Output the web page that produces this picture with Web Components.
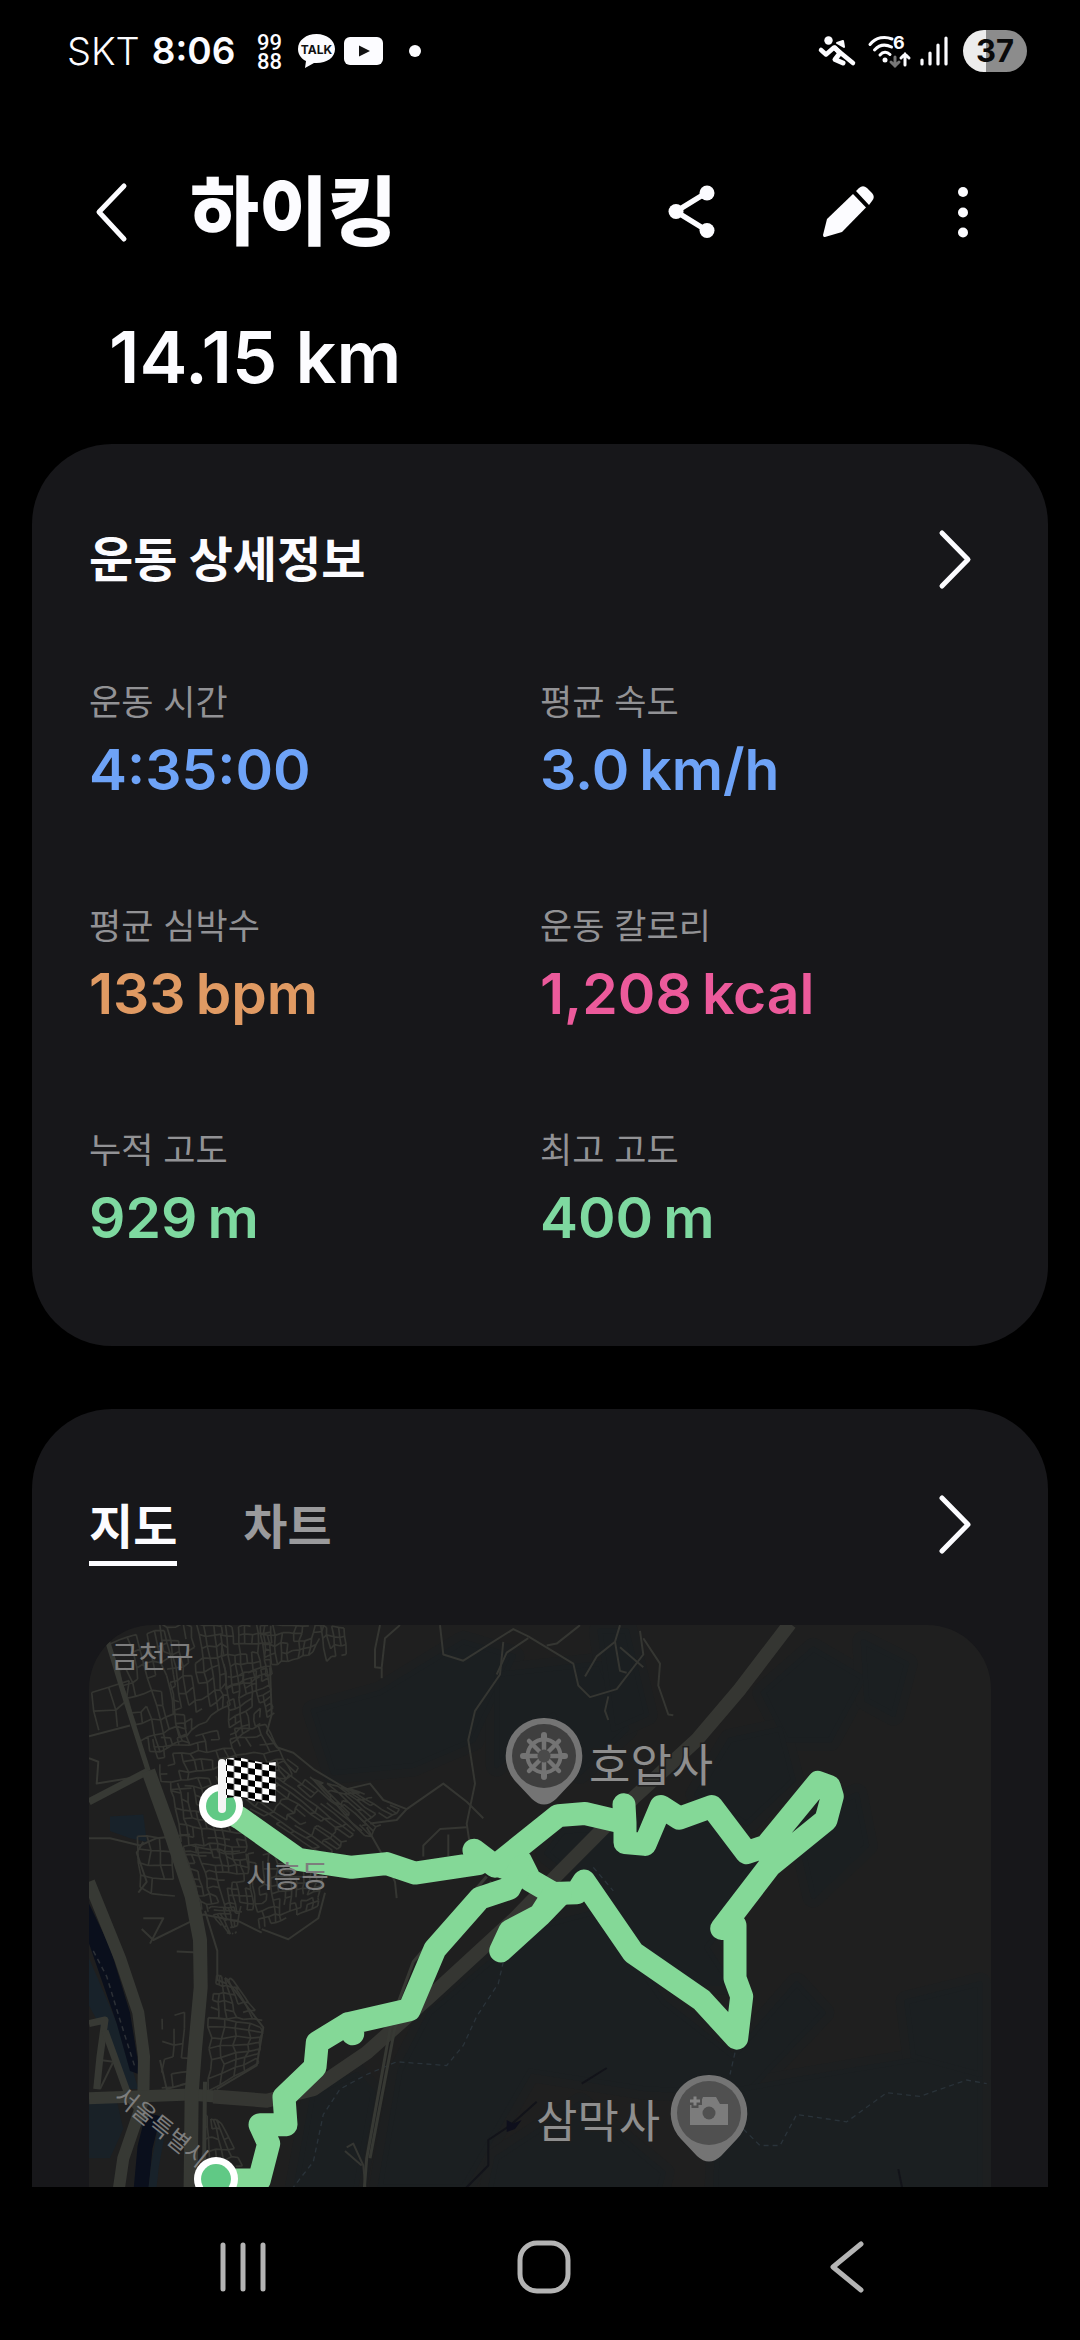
<!DOCTYPE html>
<html lang="ko">
<head>
<meta charset="utf-8">
<meta name="viewport" content="width=device-width, initial-scale=1">
<title>하이킹</title>
<style>
  body { margin: 0; background: #000; color: #fcfcff; font-family: Inter, "Noto Sans CJK KR", sans-serif; }
</style>
</head>
<body>
<hike-screen></hike-screen>

<script>
const define = (name, html, ready) => customElements.define(name, class extends HTMLElement {
  constructor() {
    super();
    const t = document.createElement('template');
    t.innerHTML = html;
    this.attachShadow({ mode: 'open' }).append(t.content.cloneNode(true));
  }
  connectedCallback() { if (ready) ready(this, this.shadowRoot); }
});

/* ---------- status bar ---------- */
define('status-bar', `
<style>
  :host { display: flex; justify-content: space-between; align-items: center; height: 102px; padding: 0 53px 0 67px; box-sizing: border-box; font-size: 38px; line-height: 46px; }
  div { display: flex; align-items: center; }
  .net { font-weight: 300; }
  .time { font-weight: 600; margin: 0 20px 0 12px; font-size: 37px; }
  svg { display: block; overflow: visible; }
  .l svg { margin-right: 9px; }
  .r { gap: 10px; }
  .bat { width: 64px; height: 42px; border-radius: 21px; justify-content: center; background: linear-gradient(90deg, #ececec 36%, #8c8c8c 36%); color: #0a0a0a; font-size: 31px; font-weight: 700; margin-left: 5px; }
</style>
<div class="l">
  <span class="net">SKT</span><span class="time">8:06</span>
  <svg width="34" height="44" viewBox="0 0 34 44" fill="#fcfcff" font-family="Roboto, sans-serif" font-size="22" font-weight="500"><text x="2" y="21">99</text><text x="2" y="40">88</text></svg>
  <svg width="37" height="36" viewBox="0 0 37 36"><path fill="#fcfcff" d="M18.500 1C8.500 1 0 7 0 16c0 6 4 10 8 12l-1 7 9-5h2.500C29 30 37 24.500 37 16S29 1 18.500 1z"/><text x="18.500" y="21" text-anchor="middle" font-size="12" font-weight="700" fill="#111">TALK</text></svg>
  <svg width="39" height="28" viewBox="0 0 39 28"><rect width="39" height="28" rx="6" fill="#fcfcff"/><path d="M15 8.500v11L26 14z" fill="#111"/></svg>
  <svg width="40" height="12" viewBox="0 0 40 12"><circle cx="23" cy="6" r="6" fill="#fcfcff"/></svg>
</div>
<div class="r">
  <svg width="40" height="32" viewBox="0 0 40 32" fill="none" stroke="#fcfcff" stroke-linecap="round" stroke-linejoin="round"><circle cx="10.500" cy="5.500" r="4.200" fill="#fcfcff" stroke="none"/><path stroke-width="4.500" d="M3 15l5 4.500 8-7 19 15.500"/><path stroke-width="5" d="M17 13l5 5-5 6.500 8 3.500"/><path d="M19 8l6-2 1 6z" fill="#fcfcff" stroke-width="2"/></svg>
  <svg width="42" height="34" viewBox="0 0 42 34" fill="none" stroke="#fcfcff" stroke-width="3" stroke-linecap="round"><path d="M2 10.500C8 3 17 2 24 5M6.500 16c5-5.500 11-6 17-3M12 21c3-3.500 7-3.500 10-.5"/><circle cx="17" cy="26" r="2.500" fill="#fcfcff" stroke="none"/><path stroke="#777" d="M27 23v9m-4-4l4 4 4-4"/><path d="M37 31V20m-4 4l4-4 4 4"/><text x="25" y="15" font-size="18" font-weight="700" fill="#fcfcff" stroke="none">6</text></svg>
  <svg width="28" height="30" viewBox="0 0 28 30" stroke="#fcfcff" stroke-width="3.200" stroke-linecap="round"><path d="M2 24v4M10 17v11M18 9v19M26 2v26"/></svg>
  <div class="bat">37</div>
</div>`);

/* ---------- app header ---------- */
define('app-header', `
<style>
  :host { display: flex; align-items: center; height: 220px; padding: 0 81px 0 75px; box-sizing: border-box; }
  button { width: 72px; height: 72px; padding: 0; border: 0; background: none; color: inherit; }
  svg { display: block; }
  h1 { flex: 1; margin: 0 0 0 43px; font-size: 75px; line-height: 112px; font-weight: 900; }
  nav { display: flex; gap: 84px; margin-right: 43px; }
</style>
<button aria-label="뒤로"><svg width="72" height="72" viewBox="0 0 72 72" fill="none" stroke="currentColor" stroke-width="5" stroke-linecap="round" stroke-linejoin="round"><path d="M49 10L24 36l25 27"/></svg></button>
<h1><slot></slot></h1>
<nav>
  <button aria-label="공유"><svg width="72" height="72" viewBox="0 0 72 72" fill="currentColor"><path d="M50 17L20 35.500 50 54" fill="none" stroke="currentColor" stroke-width="5.500"/><circle cx="51" cy="17" r="7.500"/><circle cx="20" cy="35.500" r="7.500"/><circle cx="51" cy="54.500" r="7.500"/></svg></button>
  <button aria-label="편집"><svg width="72" height="72" viewBox="0 0 72 72" fill="currentColor"><path d="M41 18L54 31.500 30 56 13 61q-2 .5-2-2L15 43z"/><path d="M44 15l3-3q4-3.500 8 0l5 5q3.500 4 0 8l-3 4z"/></svg></button>
</nav>
<button aria-label="더보기"><svg width="72" height="72" viewBox="0 0 72 72" fill="currentColor"><circle cx="36" cy="16" r="5"/><circle cx="36" cy="36.500" r="5"/><circle cx="36" cy="56.500" r="5"/></svg></button>`);

/* ---------- card ---------- */
define('info-card', `
<style>
  :host { display: block; background: #17171a; border-radius: 80px; padding: 80px 57px 94px; }
  header { display: flex; justify-content: space-between; }
  button { width: 72px; height: 72px; padding: 0; border: 0; background: none; color: inherit; }
  svg { display: block; }
</style>
<header><slot name="head"></slot>
<button aria-label="자세히"><svg width="72" height="72" viewBox="0 0 72 72" fill="none" stroke="currentColor" stroke-width="5" stroke-linecap="round" stroke-linejoin="round"><path d="M23 9l26 26.500L23 62"/></svg></button></header>
<slot></slot>`);

/* ---------- one metric ---------- */
define('metric-item', `
<style>
  :host { display: flex; flex-direction: column; gap: 12px; }
  .label { color: #929295; font-size: 35px; line-height: 44px; }
  .value { display: flex; gap: 10px; color: var(--tone); font-size: 57px; line-height: 68px; font-weight: 600; }
</style>
<div class="label"></div>
<div class="value"><span class="n"></span><span class="u"></span></div>`, (el, root) => {
  root.querySelector('.label').textContent = el.getAttribute('label');
  root.querySelector('.n').textContent = el.getAttribute('value');
  const unit = el.getAttribute('unit');
  if (unit) root.querySelector('.u').textContent = unit; else root.querySelector('.u').remove();
});

/* ---------- tabs ---------- */
define('view-tabs', `
<style>
  :host { display: flex; gap: 66px; }
  button { padding: 4px 0 0; border: 0; border-bottom: 5px solid transparent; background: none; color: #9a9a9c; font: inherit; font-size: 48px; line-height: 68px; font-weight: 700; }
  button[aria-selected=true] { color: #fcfcff; border-color: currentColor; }
</style>
<button role="tab" aria-selected="true">지도</button><button role="tab" aria-selected="false">차트</button>`);

/* ---------- map ---------- */
define('route-map', `
<style>
  :host { display: block; border-radius: 64px; overflow: hidden; background: #1f1f1f; }
  svg { display: block; width: 100%; height: auto; }
</style>
<svg viewBox="0 0 902 700" role="img" aria-label="경로 지도" font-family="'Noto Sans CJK KR', sans-serif">
  <defs>
    <pattern id="chk" width="14" height="12" patternUnits="userSpaceOnUse" patternTransform="translate(138 134) skewY(8)"><rect width="14" height="12" fill="#fff"/><path d="M0 0h7v6H0zM7 6h7v6H7z" fill="#000"/></pattern>
  </defs>
  <g id="base"></g>
  <g id="trail" fill="none" stroke="#84d897" stroke-width="23" stroke-linecap="round" stroke-linejoin="round"></g>
  <g id="ends">
    <circle cx="132" cy="181" r="22" fill="#fff"/><circle cx="132" cy="181" r="15" fill="#60c985"/>
    <circle cx="127" cy="554" r="22" fill="#fff"/><circle cx="127" cy="554" r="15" fill="#60c985"/>
    <path d="M137 134q11-3 24 1t26 2v40q-12 2-25-2t-25-2z" fill="url(#chk)"/>
    <path d="M133 138v46" stroke="#f4f4f4" stroke-width="8" stroke-linecap="round"/>
  </g>
  <g>
    <path d="M455 93a38 38 0 0 1 28 64l-16 17q-12 11-24 0l-16-17a38 38 0 0 1 28-64z" fill="#747474"/>
    <circle cx="455" cy="131" r="32" fill="#3f3f3f"/>
    <g stroke="#747474" stroke-linecap="round" fill="none"><circle cx="455" cy="131" r="16.500" stroke-width="4"/><path stroke-width="4.500" d="M455 111v40M435 131h40M440 116l30 30M470 116l-30 30"/><path stroke-width="6" d="M455 110v4M455 148v4M434 131h4M472 131h4"/></g>
    <circle cx="455" cy="131" r="6.500" fill="#4a4a4a"/>
    <path d="M620 450a38 38 0 0 1 28 64l-16 17q-12 11-24 0l-16-17a38 38 0 0 1 28-64z" fill="#747474"/>
    <circle cx="620" cy="488" r="32" fill="#505050"/>
    <path fill="#7c7c7c" d="M601 479h10l3-7h13l4 7h8v21h-38z"/><circle cx="620" cy="488" r="6.500" fill="#505050"/>
    <path d="M606 470v13M599 476.500h14" stroke="#505050" stroke-width="7"/><path d="M606 471.500v9M601 476h10" stroke="#858585" stroke-width="3"/>
  </g>
  <g fill="#7d7d7d" font-size="30"><text x="22" y="42">금천구</text><text x="157" y="262">시흥동</text>
    <text font-size="24" transform="translate(24 474) rotate(39)">서울특별시</text></g>
  <g fill="#8e8e8e" font-size="45" stroke="#1f1f1f" stroke-width="3" paint-order="stroke"><text x="500" y="157">호압사</text><text x="447" y="513">삼막사</text></g>
</svg>`, (el, root) => {
  /* survey units -> viewBox units */
  const X = x => x / 3 - 9, Y = y => y * 4 / 11 - 5;
  const d = s => s.trim().split(/\s+/).map((p, i) => { const [x, y] = p.split(',').map(Number); return (i ? 'L' : 'M') + X(x).toFixed(1) + ' ' + Y(y).toFixed(1); }).join('');
  const line = (s, w, c, extra = '') => `<path d="${d(s)}" fill="none" stroke="${c}" stroke-width="${w}" stroke-linejoin="round" ${extra}/>`;
  const area = (s, c, extra = '') => `<path d="${d(s)}Z" fill="${c}" ${extra}/>`;
  let seed = 7;
  const rnd = () => (seed = (seed * 16807) % 2147483647) / 2147483647;
  /* a block of side streets inside the quad a-b-c-d */
  const block = (q, nu, nv, keep = 0.78) => {
    const p = q.split(' ').map(v => v.split(',').map(Number));
    const at = (u, v) => [0, 1].map(k => (p[0][k] * (1 - u) + p[1][k] * u) * (1 - v) + (p[3][k] * (1 - u) + p[2][k] * u) * v);
    const g = [];
    for (let i = 0; i <= nu; i++) { g[i] = []; for (let j = 0; j <= nv; j++) g[i][j] = at((i + (rnd() - .5) * .4) / nu, (j + (rnd() - .5) * .4) / nv); }
    let out = '';
    const seg = (a, b) => { if (rnd() < keep) out += `M${X(a[0]).toFixed(1)} ${Y(a[1]).toFixed(1)}L${X(b[0]).toFixed(1)} ${Y(b[1]).toFixed(1)}`; };
    for (let i = 0; i <= nu; i++) for (let j = 0; j <= nv; j++) { if (i < nu) seg(g[i][j], g[i + 1][j]); if (j < nv) seg(g[i][j], g[i][j + 1]); }
    return `<path d="${out}" fill="none" stroke="#343531" stroke-width="1.700"/>`;
  };
  const ST = '#353632', RD = '#373934';
  let h = '';
  /* woodland: a wide faint rim round each wood, then its body */
  const woods = [
    '700,250 900,200 1150,60 1300,100 1180,330 1000,400 760,420', '1250,150 1560,120 1640,300 1500,420 1420,260 1250,400',
    '1560,30 1640,30 1700,260 1600,300', '2050,200 2200,80 2350,160 2250,330 2120,330', '1950,330 2100,300 2140,440 2000,560 1850,480',
    '1450,580 1900,560 2050,700 1880,900 1950,1000 1700,1000 1560,760 1400,640', '1050,1080 1350,850 1560,800 1750,1050 1960,1200 2150,1000 2230,1080 2000,1300 1700,1290 1350,1240 1150,1560 900,1560 960,1240',
    '2350,60 2480,120 2440,260 2360,220', '2150,560 2330,480 2360,620 2200,760', '1920,1300 2300,1240 2700,1180 2700,1700 1900,1700', '700,1300 830,1250 880,1300 820,1600 640,1600', '1250,1480 1500,1330 1750,1520 1700,1700 1200,1700', '2480,1050 2700,1000 2700,1250 2500,1200'
  ];
  h += woods.map(s => `<path d="${d(s)}Z" fill="#1d1f20" stroke="#1d1f20" stroke-width="22" stroke-linejoin="round"/>`).join('');
  h += woods.map(s => `<path d="${d(s)}Z" fill="#1b1f21" stroke="#1b1f21" stroke-width="5" stroke-linejoin="round"/>`).join('');
  h += area('90,540 190,535 200,610 150,600 90,580', '#18222a');
  h += area('27,1330 110,1320 130,1400 90,1480 27,1480', '#192127');
  /* stream */
  h += area('27,930 60,1000 130,1150 175,1290 140,1290 80,1150 27,1060', '#18222a');
  h += area('27,780 90,900 150,1080 180,1250 150,1240 110,1110 27,890', '#0a0f1c');
  h += line('40,910 80,980 120,1100 165,1230', 1.5, '#2c3036', 'stroke-dasharray="5 4"');
  h += line('220,1360 195,1450 170,1700', 15, '#0a0f1c') + line('245,1400 225,1500 200,1700', 8, '#18222a');
  /* side streets */
  h += block('90,60 250,30 330,330 190,370', 6, 8) + block('240,14 420,14 450,230 300,330', 8, 8) + block('415,14 570,14 575,150 440,190', 8, 6)
    + block('540,14 730,14 700,90 560,130', 9, 4) + block('720,14 790,20 800,90 740,110', 4, 3) + block('440,160 560,130 580,260 450,340', 7, 8)
    + block('220,330 560,290 640,430 250,470', 14, 6, .7) + block('270,440 480,500 500,640 310,640', 9, 8, .75)
    + block('480,500 620,380 860,560 740,650', 12, 7, .75) + block('700,440 830,470 960,520 860,600', 9, 5, .7)
    + block('310,620 500,640 520,800 370,800', 9, 8, .75) + block('500,640 740,660 710,790 540,850', 11, 9, .75)
    + block('380,790 480,790 470,860 440,860', 6, 4, .7) + block('410,980 460,990 545,1100 390,1090', 6, 5, .7)
    + block('390,1090 550,1120 530,1220 390,1290', 4, 7, .95) + block('370,1360 420,1380 500,1520 370,1560', 5, 6, .7)
    + block('170,600 270,600 290,760 180,740', 3, 4, .6) + block('30,190 140,170 160,290 60,300', 2, 2, .9) + block('250,1090 340,1080 330,1280 250,1280', 3, 5, .6);
  [ '570,130 575,260 560,310 590,350 640,365 700,410 800,465 870,450 910,495 980,520 1090,450 1160,500 1210,545',
    '980,520 950,550 870,560', '27,380 55,390 50,450 180,430', '27,600 90,600 180,620 230,600 330,590', '27,320 150,290',
    '190,610 170,640 200,720 175,750', '185,850 220,880 330,830 370,810 480,830 545,860', '190,820 250,820 210,890', '290,912 370,915',
    '545,850 625,878 715,820 735,750', '375,800 412,910 412,990 440,1000', '860,570 910,650 945,720 950,765', '1030,650 1030,620 1080,575 1160,570', '1105,590 1105,650',
    '1270,60 1260,150 1185,250 1165,330 1185,450 1160,560 1170,620', '1250,150 1280,90 1345,50', '1080,14 1090,95 1150,112 1300,25 1345,45 1480,120 1495,180 1530,212 1610,190 1690,95 1680,30',
    '1400,70 1430,65 1500,14', '1515,155 1550,100 1605,60 1620,14', '1605,60 1620,140 1640,145', '1620,75 1690,130', '1690,50 1740,120 1735,180 1765,260 1780,262', '1585,210 1575,250 1585,275',
    '900,14 885,80 885,130 905,132 905,160', '960,14 915,50 905,130', '240,1210 260,1290 340,1270', '410,1290 530,1225 550,1120 440,990',
    '800,1450 820,1440 850,1500 860,1600', '795,1460 845,1500', '60,1210 100,1215 60,1290'
  ].forEach(s => { h += line(s, 2, ST); });
  /* trails on foot */
  ['1270,940 1255,1000 1190,1090 1150,1170 1100,1225 950,1215 860,1250 780,1290 730,1360 700,1490 640,1560', '1965,1190 1950,1250', '1990,1400 2040,1445 2100,1445 2150,1360 2300,1380 2420,1300 2520,1310 2660,1265 2720,1275', '1540,680 1600,745'
  ].forEach(s => { h += line(s, 1.3, '#2a333a', 'stroke-dasharray="5 4"'); });
  h += line('1370,1325 1290,1390 1225,1430 1225,1500 1160,1560 1120,1620', 2, '#121319') + area('1280,1375 1300,1385 1325,1375 1305,1400 1280,1408', '#0e0f1c') + line('1505,1275 1580,1232', 2, '#121319') + line('2455,1510 2475,1600', 2, '#121319');
  /* main roads */
  h += line('70,20 140,230 205,415', 5, RD) + line('27,500 205,415', 7, RD);
  h += line('27,720 120,930 175,1080 192,1200 190,1320 130,1480 95,1700', 12, RD) + line('27,1110 75,1100 60,1200 50,1290', 7, RD) + line('75,1130 150,1320 200,1370', 7, RD);
  h += line('27,1315 330,1305 560,1322', 12, RD);
  h += line('205,415 270,580 335,760 360,880 362,1010 345,1180 335,1300 330,1700', 14, RD) + line('375,1270 370,1700', 4, RD);
  h += line('400,1310 560,1322 700,1290 860,1190 1050,1035 1300,825 1400,730 1660,490 1850,330 1980,190 2130,10', 14, '#353632');
  h += line('1220,705 1000,940 935,1100 860,1480 850,1600', 3, RD) + line('1235,720 1020,950 945,1120 870,1480', 3, RD);
  root.getElementById('base').innerHTML = h;
  root.getElementById('trail').innerHTML = [
    '423,512 480,545 655,658 815,680 920,670 1005,696 1195,670 1182,633 1245,677 1435,538 1515,532 1635,558 1632,508 1635,560 1635,612 1695,617 1743,513 1798,545 1895,513 2000,640 2058,622 2215,447 2248,458 2257,485 2238,550 2070,675 1925,848 1965,840 1965,985 1985,1035 1970,1150 1865,1045 1660,915 1512,718 1490,750 1420,752 1350,715 1320,660 1270,680',
    '1420,755 1380,812 1290,855 1262,910 1380,812 1440,755', '1320,680 1288,738 1200,765 1065,905 988,1072 805,1110 818,1138 805,1110 712,1162 705,1230 612,1312 618,1388 540,1388 566,1440 538,1540 408,1540'
  ].map(s => `<path d="${d(s)}"/>`).join('');
});

/* ---------- system navigation ---------- */
define('system-nav', `
<style>
  :host { display: grid; grid-template-columns: repeat(3, 1fr); place-items: center; height: 153px; padding: 0 84px 0 92px; box-sizing: border-box; background: #000; color: #b4b4b4; }
  button { padding: 8px 0 0; border: 0; background: none; color: inherit; }
  svg { display: block; fill: none; stroke: currentColor; stroke-width: 5; stroke-linecap: round; stroke-linejoin: round; }
</style>
<button aria-label="최근 앱"><svg width="72" height="72" viewBox="0 0 72 72"><path d="M16 13v44M36 13v44M56 13v44"/></svg></button>
<button aria-label="홈"><svg width="72" height="72" viewBox="0 0 72 72"><rect x="12" y="11" width="48" height="48" rx="17"/></svg></button>
<button aria-label="뒤로"><svg width="72" height="72" viewBox="0 0 72 72"><path d="M52 12L24 35l28 23"/></svg></button>`);

/* ---------- screen ---------- */
define('hike-screen', `
<style>
  :host { display: flex; flex-direction: column; height: 100vh; }
  main { flex: 1; min-height: 0; overflow: hidden; }
  .distance { margin: 0; padding: 0 109px 52px; font-size: 72px; line-height: 70px; font-weight: 600; }
  .cards { display: flex; flex-direction: column; gap: 63px; padding: 0 32px; }
  h2 { margin: 0; font-size: 48px; line-height: 72px; font-weight: 700; }
  .grid { display: grid; grid-template-columns: 1fr 1fr; row-gap: 100px; margin-top: 84px; }
  .blue { --tone: #6ea3f7; } .orange { --tone: #e09a63; } .pink { --tone: #ec5a9b; } .green { --tone: #7ed9a0; }
  route-map { margin-top: 59px; }
</style>
<status-bar></status-bar>
<app-header>하이킹</app-header>
<p class="distance">14.15 km</p>
<main>
  <div class="cards">
    <info-card>
      <h2 slot="head">운동 상세정보</h2>
      <div class="grid">
        <metric-item class="blue" label="운동 시간" value="4:35:00"></metric-item>
        <metric-item class="blue" label="평균 속도" value="3.0" unit="km/h"></metric-item>
        <metric-item class="orange" label="평균 심박수" value="133" unit="bpm"></metric-item>
        <metric-item class="pink" label="운동 칼로리" value="1,208" unit="kcal"></metric-item>
        <metric-item class="green" label="누적 고도" value="929" unit="m"></metric-item>
        <metric-item class="green" label="최고 고도" value="400" unit="m"></metric-item>
      </div>
    </info-card>
    <info-card>
      <view-tabs slot="head"></view-tabs>
      <route-map></route-map>
    </info-card>
  </div>
</main>
<system-nav></system-nav>`);
</script>
</body>
</html>
